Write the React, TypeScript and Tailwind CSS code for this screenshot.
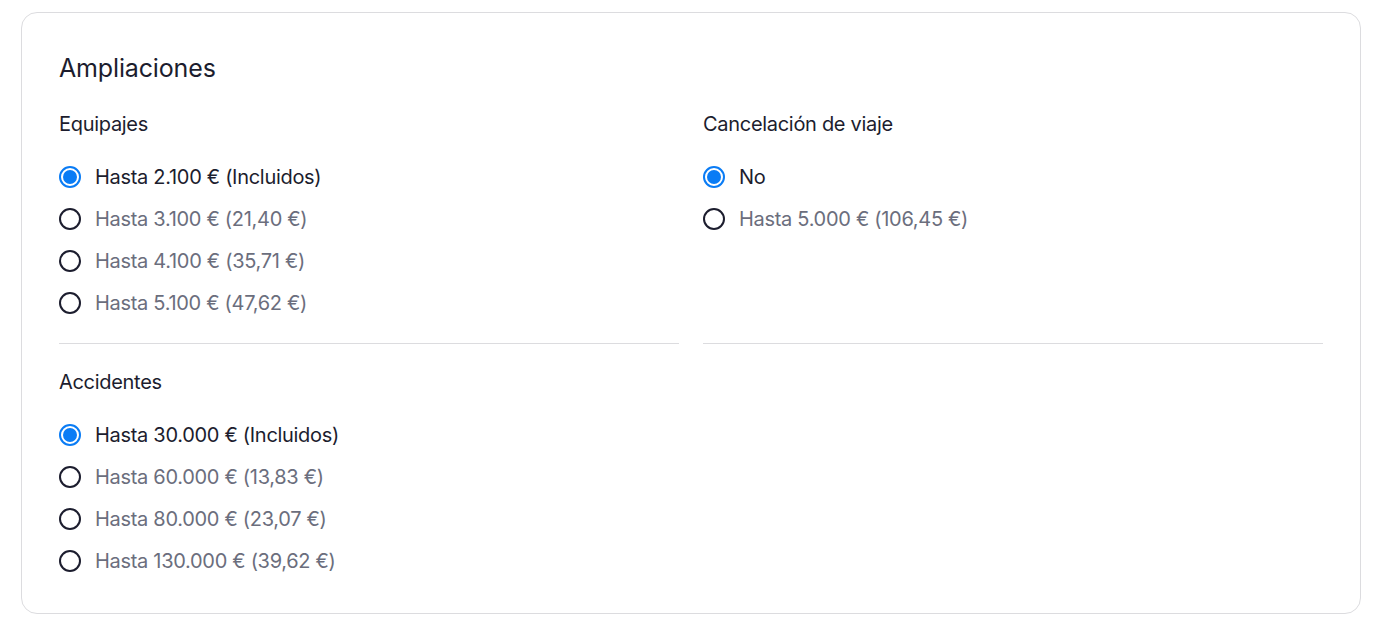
import { useState } from 'react';

const sections = [
  {
    id: 'equipajes',
    title: 'Equipajes',
    options: [
      'Hasta 2.100 € (Incluidos)',
      'Hasta 3.100 € (21,40 €)',
      'Hasta 4.100 € (35,71 €)',
      'Hasta 5.100 € (47,62 €)',
    ],
  },
  {
    id: 'cancelacion',
    title: 'Cancelación de viaje',
    options: ['No', 'Hasta 5.000 € (106,45 €)'],
  },
  {
    id: 'accidentes',
    title: 'Accidentes',
    options: [
      'Hasta 30.000 € (Incluidos)',
      'Hasta 60.000 € (13,83 €)',
      'Hasta 80.000 € (23,07 €)',
      'Hasta 130.000 € (39,62 €)',
    ],
  },
];

function Radio({ checked }: { checked: boolean }) {
  return checked ? (
    <span className="flex h-[22px] w-[22px] shrink-0 items-center justify-center rounded-full border-2 border-[#0a7cf5] bg-white">
      <span className="h-[14px] w-[14px] rounded-full bg-[#0a7cf5]" />
    </span>
  ) : (
    <span className="h-[22px] w-[22px] shrink-0 rounded-full border-2 border-[#1c1d2e] bg-white" />
  );
}

function Section({
  title,
  options,
  divider,
  top,
}: {
  title: string;
  options: string[];
  divider?: boolean;
  top?: boolean;
}) {
  const [value, setValue] = useState(0);
  return (
    <div className={`${divider ? 'border-b border-[#dcdcdf] pb-[19px]' : ''} ${top ? 'pt-[24px]' : ''}`}>
      <h3 className="text-[20px] leading-[28px] tracking-[-0.3px] text-[#1c1d2e]">{title}</h3>
      <div className="mt-[18px] flex flex-col">
        {options.map((label, i) => (
          <label
            key={label}
            onClick={() => setValue(i)}
            className="flex h-[42px] cursor-pointer items-center gap-[14px]"
          >
            <Radio checked={value === i} />
            <span
              className={`text-[20px] leading-[28px] tracking-[-0.3px] ${value === i ? 'text-[#1c1d2e]' : 'text-[#6b6e7d]'}`}
            >
              {label}
            </span>
          </label>
        ))}
      </div>
    </div>
  );
}

export default function App() {
  return (
    <div className="min-h-screen bg-white pl-[21px] pt-[12px] font-['Inter',_'Liberation_Sans',_sans-serif]">
      <div className="w-[1340px] rounded-[16px] border border-[#dcdcdf] bg-white px-[37px] pb-[31px] pt-[39px]">
        <h2 className="text-[25px] leading-[32px] tracking-[-0.15px] text-[#1c1d2e]">Ampliaciones</h2>
        <div className="mt-[26px] grid grid-cols-2 gap-x-6">
          <Section title={sections[0].title} options={sections[0].options} divider />
          <Section title={sections[1].title} options={sections[1].options} divider />
          <Section title={sections[2].title} options={sections[2].options} top />
        </div>
      </div>
    </div>
  );
}
